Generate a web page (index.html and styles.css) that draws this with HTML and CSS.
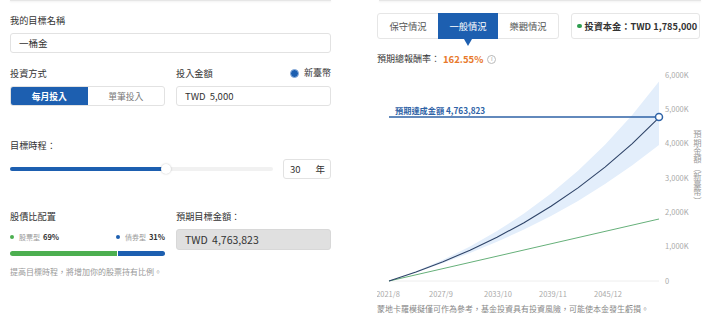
FILE: index.html
```html
<!DOCTYPE html>
<html lang="zh-Hant">
<head>
  <meta charset="UTF-8" />
  <meta name="viewport" content="width=device-width, initial-scale=1.0" />
  <title>目標試算</title>
  <link rel="stylesheet" href="styles.css">
</head>
<body>
  <div class="page">
    <section class="panel form">
      <div class="edge"></div>
      <div class="label first">我的目標名稱</div>
      <div class="field">一桶金</div>

      <div class="pair row-method">
        <div>
          <div class="label">投資方式</div>
          <div class="segment">
            <span class="seg active">每月投入</span>
            <span class="seg">單筆投入</span>
          </div>
        </div>
        <div>
          <div class="label label-split">投入金額 <span class="currency"><i class="radio"></i>新臺幣</span></div>
          <div class="field">TWD 5,000</div>
        </div>
      </div>

      <div class="label period">目標時程：</div>
      <div class="slider-row">
        <div class="slider">
          <div class="fill" style="width: 59.3%"></div>
          <span class="thumb" style="left: 59.3%"></span>
        </div>
        <div class="years"><span>30</span><span>年</span></div>
      </div>

      <div class="pair row-alloc">
        <div>
          <div class="label">股債比配置</div>
          <div class="legend">
            <span><i class="dot green"></i>股票型 <b>69%</b></span>
            <span><i class="dot blue"></i>債券型 <b>31%</b></span>
          </div>
          <div class="ratio">
            <div class="stock" style="width: 69%"></div>
            <div class="bond"></div>
          </div>
          <p class="hint">提高目標時程，將增加你的股票持有比例。</p>
        </div>
        <div>
          <div class="label">預期目標金額：</div>
          <div class="field readonly">TWD 4,763,823</div>
        </div>
      </div>
    </section>

    <section class="panel result">
      <div class="edge"></div>
      <div class="toolbar">
        <div class="tabs">
          <span class="tab">保守情況</span>
          <span class="tab active">一般情況</span>
          <span class="tab">樂觀情況</span>
        </div>
        <div class="principal"><i class="dot green-dark"></i>投資本金：TWD 1,785,000</div>
      </div>
      <div class="rate">預期總報酬率：<b>162.55%</b><span class="info">i</span></div>

      <div class="chart-wrap">
        <svg class="chart" width="330" height="234" viewBox="0 0 330 234">
          <line class="base" x1="12" y1="213" x2="282" y2="213" />
          <polygon class="band" points="12,213 39,203.3 66,191.8 93,178.5 120,163.1 147,145.6 174,125.6 201,102.7 228,76.7 255,47.2 282,13.6 282,76.9 255,97.5 228,116.1 201,132.9 174,148 147,161.6 120,173.8 93,185 66,195.1 39,204.4" />
          <line class="principal-line" x1="12" y1="213" x2="282" y2="151" />
          <polyline class="median" points="12,213 39,203.9 66,193.7 93,182.2 120,169.2 147,154.7 174,138.3 201,119.9 228,99.1 255,75.8 282,49.6" />
          <line class="target" x1="12" y1="49" x2="282" y2="49" />
          <circle class="end" cx="282" cy="49" r="3.5" />
          <text class="target-label" x="18" y="45.5">預期達成金額 4,763,823</text>

          <text class="tick" x="288" y="9.7">6,000K</text>
          <text class="tick" x="288" y="44">5,000K</text>
          <text class="tick" x="288" y="78.3">4,000K</text>
          <text class="tick" x="288" y="112.6">3,000K</text>
          <text class="tick" x="288" y="146.9">2,000K</text>
          <text class="tick" x="288" y="181.2">1,000K</text>
          <text class="tick" x="288" y="215.5">0</text>

          <text class="tick mid" x="11" y="229">2021/8</text>
          <text class="tick mid" x="64" y="229">2027/9</text>
          <text class="tick mid" x="121" y="229">2033/10</text>
          <text class="tick mid" x="176" y="229">2039/11</text>
          <text class="tick mid" x="231" y="229">2045/12</text>
        </svg>
        <span class="axis-title">預期金額（新臺幣）</span>
      </div>

      <p class="disclaimer">蒙地卡羅模擬僅可作為參考，基金投資具有投資風險，可能使本金發生虧損。</p>
    </section>
  </div>
</body>
</html>
```

FILE: styles.css
```css
body {
  margin: 0;
  background: #fff;
  color: #333;
  font-family: "Noto Sans CJK TC", "Noto Sans", sans-serif;
}
.page {
  display: flex;
  gap: 46px;
  padding-left: 10px;
}
.form {
  width: 321px;
}
.result {
  width: 330px;
}
.edge {
  height: 1px;
  background: #e6e6e6;
  box-shadow: 0 1px 2px rgba(0, 0, 0, 0.08);
}
.result .edge {
  margin-left: 2px;
  width: 322px;
}
.label {
  font-size: 9.2px;
  line-height: 14px;
  color: #333;
}
.first {
  margin-top: 12px;
}
.field {
  box-sizing: border-box;
  height: 20px;
  margin-top: 6px;
  padding: 0 8px;
  border: 1px solid #e2e2e2;
  border-radius: 3px;
  font-size: 9.5px;
  line-height: 18px;
  word-spacing: 2px;
}
.pair {
  display: grid;
  grid-template-columns: 155px 155px;
  column-gap: 11px;
}
.row-method {
  margin-top: 13px;
}
.label-split {
  display: flex;
  justify-content: space-between;
  align-items: center;
}
.currency {
  display: flex;
  align-items: center;
  gap: 5px;
  font-size: 9px;
}
.radio {
  width: 9px;
  height: 9px;
  box-sizing: border-box;
  border-radius: 50%;
  background: #1d5fb0;
  border: 1px solid #8fb0db;
}
.segment {
  display: flex;
  box-sizing: border-box;
  height: 20px;
  margin-top: 6px;
  border: 1px solid #e2e2e2;
  border-radius: 3px;
  overflow: hidden;
}
.seg {
  flex: 1;
  display: flex;
  align-items: center;
  justify-content: center;
  font-size: 8.8px;
  color: #777;
}
.seg.active {
  background: #1d5fb0;
  color: #fff;
  font-weight: 700;
}
.period {
  margin-top: 32px;
}
.slider-row {
  display: flex;
  align-items: center;
  height: 20px;
  margin-top: 7px;
}
.slider {
  position: relative;
  width: 263px;
  height: 4px;
  border-radius: 2px;
  background: #f1f1f1;
}
.fill {
  height: 100%;
  border-radius: 2px;
  background: #1d5fb0;
}
.thumb {
  position: absolute;
  top: 50%;
  width: 10px;
  height: 10px;
  margin: -5px 0 0 -5px;
  border-radius: 50%;
  background: #fff;
  box-shadow: 0 0 2px rgba(0, 0, 0, 0.25);
}
.years {
  box-sizing: border-box;
  display: flex;
  justify-content: space-between;
  align-items: center;
  width: 48px;
  height: 20px;
  margin-left: 10px;
  padding: 0 5px 0 6px;
  border: 1px solid #e2e2e2;
  border-radius: 3px;
  font-size: 9.5px;
}
.row-alloc {
  margin-top: 30px;
}
.legend {
  display: flex;
  justify-content: space-between;
  margin-top: 8px;
  font-size: 7px;
  line-height: 12px;
  color: #999;
}
.legend span {
  display: flex;
  align-items: center;
}
.legend b {
  margin-left: 3px;
  color: #333;
  font-size: 7.5px;
}
.dot {
  display: inline-block;
  flex-shrink: 0;
  width: 4px;
  height: 4px;
  margin-right: 5px;
  border-radius: 50%;
}
.dot.green {
  background: #4caf50;
}
.dot.blue {
  background: #1d5fb0;
}
.dot.green-dark {
  width: 4.5px;
  height: 4.5px;
  background: #2e9e4f;
  margin-right: 3px;
}
.ratio {
  display: flex;
  height: 5px;
  margin-top: 8px;
  border-radius: 3px;
  overflow: hidden;
}
.stock {
  background: #4caf50;
}
.bond {
  flex: 1;
  background: #1d5fb0;
  border-left: 1px solid #fff;
}
.hint {
  margin: 10px 0 0;
  font-size: 8px;
  line-height: 12px;
  color: #999;
}
.readonly {
  height: 21px;
  line-height: 19px;
  background: #e0e0e0;
  border-color: #d8d8d8;
  font-size: 10.5px;
}
.toolbar {
  display: flex;
  gap: 12px;
  height: 26px;
  margin-top: 12px;
}
.tabs {
  display: flex;
  border: 1px solid #e6e6e6;
  border-radius: 3px;
}
.tab {
  position: relative;
  display: flex;
  align-items: center;
  justify-content: center;
  width: 60px;
  font-size: 9.3px;
  color: #555;
}
.tab.active {
  margin: -1px 0;
  background: #1d5fb0;
  color: #fff;
}
.tab.active::after {
  content: "";
  position: absolute;
  top: 100%;
  left: 50%;
  margin-left: -4.5px;
  border-left: 4.5px solid transparent;
  border-right: 4.5px solid transparent;
  border-top: 7px solid #1d5fb0;
}
.principal {
  box-sizing: border-box;
  display: flex;
  align-items: center;
  width: 129px;
  padding: 0 4px 0 5px;
  border: 1px solid #e6e6e6;
  border-radius: 3px;
  font-size: 9.2px;
  font-weight: 700;
  color: #333;
  white-space: nowrap;
}
.rate {
  display: flex;
  align-items: center;
  margin-top: 13px;
  font-size: 9px;
  line-height: 14px;
  color: #333;
}
.rate b {
  margin-left: 3px;
  font-size: 9.5px;
  color: #e8792b;
}
.info {
  box-sizing: border-box;
  display: inline-flex;
  align-items: center;
  justify-content: center;
  width: 9px;
  height: 9px;
  margin-left: 4px;
  border: 1px solid #bbb;
  border-radius: 50%;
  font-size: 6px;
  line-height: 1;
  color: #aaa;
}
.chart-wrap {
  position: relative;
  margin-top: 2px;
}
.chart {
  display: block;
  font-family: "Noto Sans CJK TC", "Noto Sans", sans-serif;
}
.chart .base {
  stroke: #eeeeee;
  stroke-width: 1;
}
.chart .band {
  fill: #e3eefb;
}
.chart .principal-line {
  stroke: #66b07a;
  stroke-width: 1;
}
.chart .median {
  fill: none;
  stroke: #2f4468;
  stroke-width: 1.1;
  stroke-linejoin: round;
}
.chart .target {
  stroke: #2e62a6;
  stroke-width: 1.5;
}
.chart .end {
  fill: #fff;
  stroke: #2e62a6;
  stroke-width: 1.5;
}
.chart .target-label {
  font-size: 8.2px;
  font-weight: 700;
  fill: #2e62a6;
}
.chart .tick {
  font-size: 7.5px;
  fill: #aaa;
}
.chart .mid {
  text-anchor: middle;
}
.axis-title {
  position: absolute;
  top: 62px;
  left: 316px;
  writing-mode: vertical-rl;
  text-orientation: upright;
  font-size: 8.3px;
  line-height: 8.3px;
  color: #999;
}
.disclaimer {
  margin: 1px 0 0;
  font-size: 8px;
  line-height: 12px;
  color: #888;
}
```
